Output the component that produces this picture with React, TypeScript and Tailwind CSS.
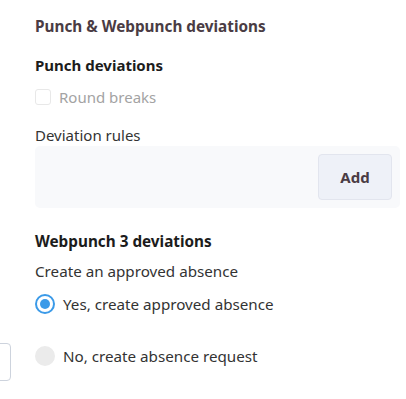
import React from "react";

export default function App() {
  return (
    <div
      className="relative h-[399px] w-[406px] overflow-hidden bg-white text-[#2b2b2b]"
      style={{ fontFamily: "'Noto Sans', 'Open Sans', sans-serif" }}
    >
      {/* sliver of a panel sticking in from the left */}
      <div className="absolute left-[-10px] top-[343px] h-[38px] w-[21px] rounded-[4px] border border-[#cdd3dd] bg-white" />

      <div className="pl-[35px] pt-[16px]">
        <h2 className="text-[15.3px] font-bold leading-[20px] text-[#4a3c44]">Punch &amp; Webpunch deviations</h2>

        <h3 className="mt-[18px] text-[15px] font-bold leading-[22px] text-[#1c1c1c]">Punch deviations</h3>

        <label className="mt-[11px] flex items-center gap-[8px]">
          <span className="h-[16px] w-[16px] rounded-[3px] border border-[#e8e8e8] bg-white" />
          <span className="text-[15px] leading-[20px] text-[#a3a3a3]">Round breaks</span>
        </label>

        <div className="mt-[18px] text-[15px] leading-[20px] text-[#333]">Deviation rules</div>

        <div className="mr-[6px] mt-[1px] flex h-[62px] items-center justify-end rounded-[5px] bg-[#f8f9fb] pr-[8px]">
          <button className="h-[46px] w-[74px] rounded-[4px] border border-[#e2e5ee] bg-[#eef1f8] text-[15px] font-bold text-[#4a3c44]">
            Add
          </button>
        </div>

        <h3 className="mt-[22px] text-[15.3px] font-bold leading-[22px] text-[#1c1c1c]">Webpunch 3 deviations</h3>

        <div className="mt-[9px] text-[15.2px] leading-[20px] text-[#333]">Create an approved absence</div>

        <label className="mt-[13px] flex items-center gap-[8px]">
          <span className="flex h-[20px] w-[20px] items-center justify-center rounded-full border-[2px] border-[#3b9ae8] bg-white">
            <span className="h-[10px] w-[10px] rounded-full bg-[#3b9ae8]" />
          </span>
          <span className="text-[15.2px] leading-[20px] text-[#333]">Yes, create approved absence</span>
        </label>

        <label className="mt-[32px] flex items-center gap-[8px]">
          <span className="h-[20px] w-[20px] rounded-full bg-[#ebebeb]" />
          <span className="text-[15.2px] leading-[20px] text-[#333]">No, create absence request</span>
        </label>
      </div>
    </div>
  );
}
